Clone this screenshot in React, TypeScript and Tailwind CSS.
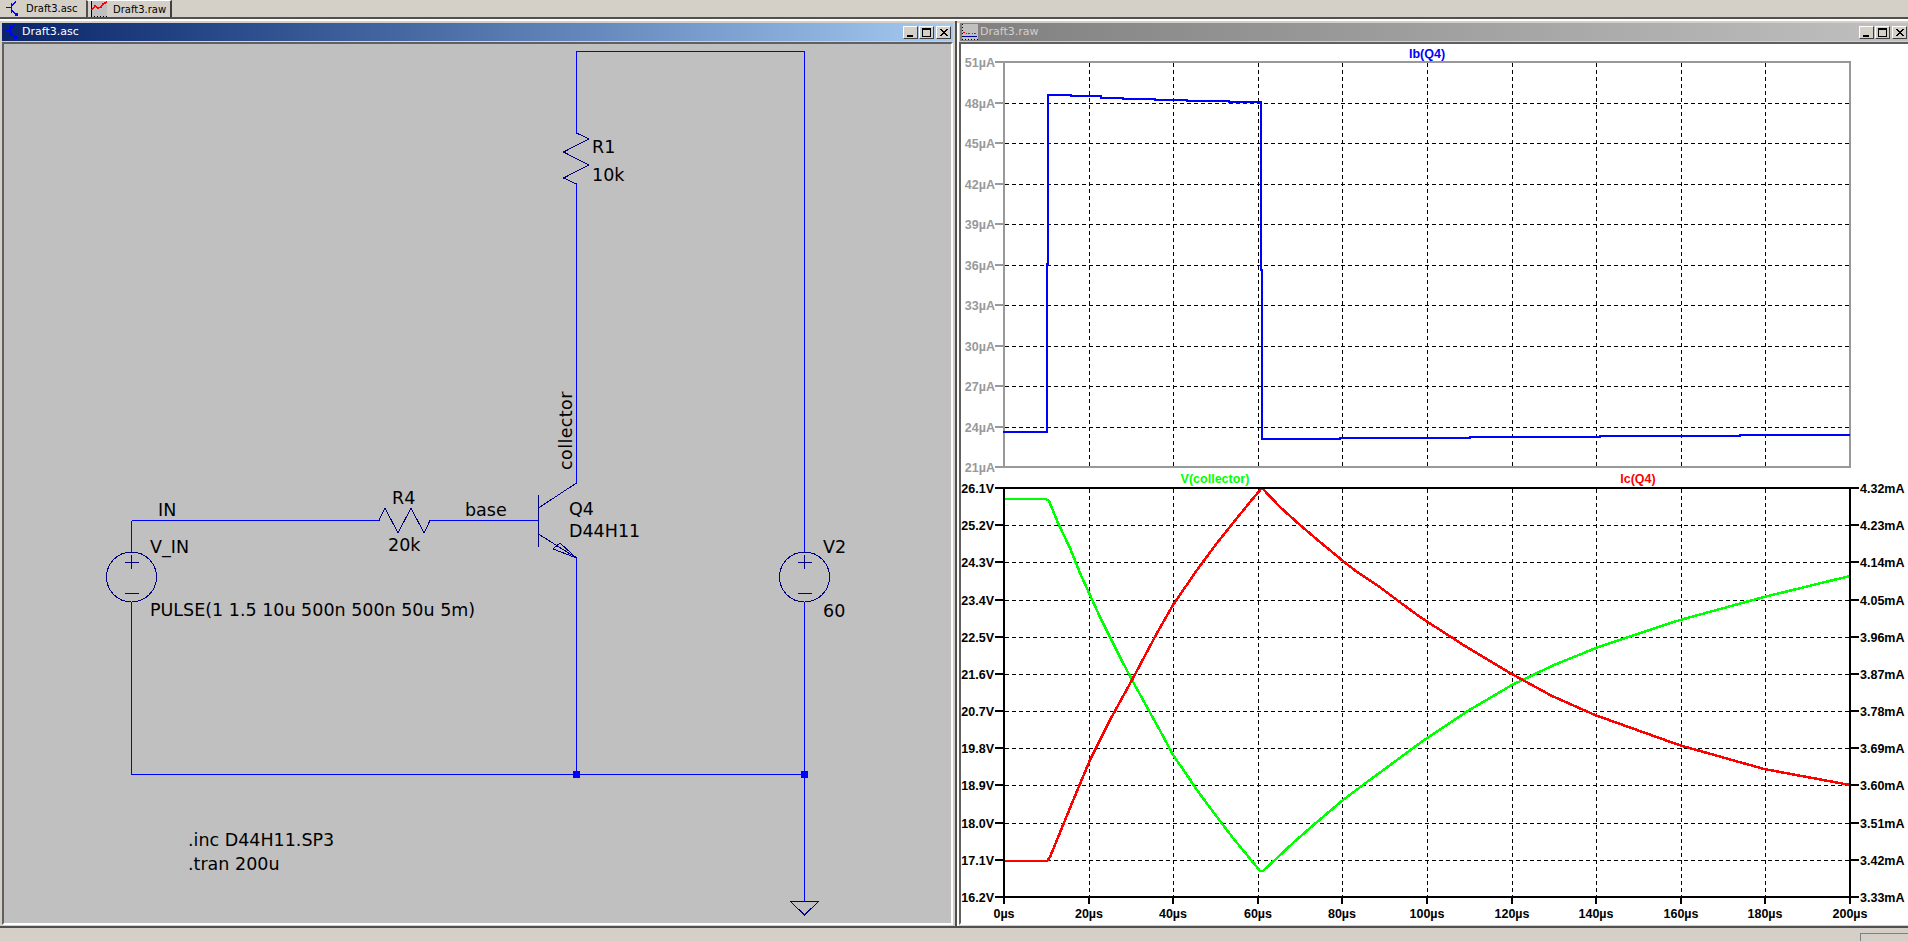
import React from "react"

const AXIS_X0 = 1004
const STEP_X = 84.6
const xLabels = ["0µs", "20µs", "40µs", "60µs", "80µs", "100µs", "120µs", "140µs", "160µs", "180µs", "200µs"]
const topLabels = ["51µA", "48µA", "45µA", "42µA", "39µA", "36µA", "33µA", "30µA", "27µA", "24µA", "21µA"]
const leftLabels = ["26.1V", "25.2V", "24.3V", "23.4V", "22.5V", "21.6V", "20.7V", "19.8V", "18.9V", "18.0V", "17.1V", "16.2V"]
const rightLabels = ["4.32mA", "4.23mA", "4.14mA", "4.05mA", "3.96mA", "3.87mA", "3.78mA", "3.69mA", "3.60mA", "3.51mA", "3.42mA", "3.33mA"]

const ib =
  "1003,432 1047,432 1047,264 1048,264 1048,95 1071,95 1071,96 1101,96 1101,98 1123,98 1123,99 1155,99 1155,100 1187,100 1187,101 1229,101 1229,102 1261,102 1261,270 1262,270 1262,439 1340,439 1340,438 1470,438 1470,437 1600,437 1600,436 1740,436 1740,435 1850,435"
const vc =
  "1004,499 1046,499 1049,501 1058,523 1070,548 1080,573 1090,595 1100,617 1110,637 1120,657 1132,680 1142,698 1153,718 1163,736 1173,755 1187,775 1197,790 1208,805 1220,821 1233,838 1247,855 1260,871 1263,871 1277,858 1293,843 1317,822 1343,800 1367,782 1397,760 1420,743 1466,712 1512,685 1554,665 1596,648 1680,620 1764,597 1850,576"
const ic =
  "1004,861 1047,861 1050,857 1070,808 1090,760 1110,720 1132,680 1157,633 1173,605 1197,570 1217,543 1233,523 1250,502 1262,488 1280,507 1300,525 1320,542 1343,561 1357,572 1377,585 1397,600 1420,617 1465,646 1510,673 1552,696 1595,715 1679,745 1764,769 1850,785"

function Tick({ x, y, x2, y2, gray }: { x: number; y: number; x2: number; y2: number; gray?: boolean }) {
  return <line x1={x} y1={y} x2={x2} y2={y2} stroke={gray ? "#999999" : "#000000"} strokeWidth={2} />
}

function Plots() {
  const topRows = topLabels.map((_, i) => Math.round(62 + 40.5 * i))
  const bottomRows = leftLabels.map((_, i) => Math.round(488 + (409 / 11) * i))
  const cols = xLabels.map((_, i) => Math.round(AXIS_X0 + STEP_X * i))

  return (
    <svg viewBox="961 44 947 879" className="block h-full w-full font-['Liberation_Sans',Arial,sans-serif] text-[12.5px] font-bold" shapeRendering="crispEdges">
      {/* grid */}
      <g stroke="#000000" strokeWidth={1} strokeDasharray="4 3">
        {cols.slice(1, -1).map((x) => (
          <g key={x}>
            <line x1={x + 0.5} y1={63} x2={x + 0.5} y2={466} />
            <line x1={x + 0.5} y1={489} x2={x + 0.5} y2={896} />
          </g>
        ))}
        {topRows.slice(1, -1).map((y) => (
          <line key={y} x1={1005} y1={y + 0.5} x2={1849} y2={y + 0.5} />
        ))}
        {bottomRows.slice(1, -1).map((y) => (
          <line key={y} x1={1005} y1={y + 0.5} x2={1849} y2={y + 0.5} />
        ))}
      </g>

      {/* top plot */}
      <rect x={1004} y={62} width={846} height={405} fill="none" stroke="#999999" strokeWidth={2} />
      {topRows.map((y, i) => (
        <g key={y}>
          <Tick x={995} y={y} x2={1004} y2={y} gray />
          <text x={995} y={y + 5} textAnchor="end" className="fill-[#999999]">{topLabels[i]}</text>
        </g>
      ))}
      <text x={1427} y={58} textAnchor="middle" className="fill-[#0000ff]">Ib(Q4)</text>
      <polyline points={ib} fill="none" stroke="#0000ff" strokeWidth={2.5} />

      {/* bottom plot */}
      <polyline points={vc} fill="none" stroke="#00ff00" strokeWidth={2.5} />
      <polyline points={ic} fill="none" stroke="#ff0000" strokeWidth={2.5} />
      <rect x={1004} y={488} width={846} height={409} fill="none" stroke="#000000" strokeWidth={2} />
      {bottomRows.map((y, i) => (
        <g key={y}>
          <Tick x={995} y={y} x2={1004} y2={y} />
          <text x={994} y={y + 5} textAnchor="end" className="fill-black">{leftLabels[i]}</text>
          <Tick x={1850} y={y} x2={1859} y2={y} />
          <text x={1860} y={y + 5} className="fill-black">{rightLabels[i]}</text>
        </g>
      ))}
      {cols.map((x, i) => (
        <g key={x}>
          <Tick x={x} y={897} x2={x} y2={904} />
          <text x={x} y={918} textAnchor="middle" className="fill-black">{xLabels[i]}</text>
        </g>
      ))}
      <text x={1215} y={483} textAnchor="middle" className="fill-[#00ff00]">V(collector)</text>
      <text x={1638} y={483} textAnchor="middle" className="fill-[#ff0000]">Ic(Q4)</text>
    </svg>
  )
}

function Source({ cy, cx }: { cx: number; cy: number }) {
  return (
    <g stroke="#000080" fill="none">
      <circle cx={cx} cy={cy} r={25} />
      <line x1={cx - 7} y1={cy - 15} x2={cx + 7} y2={cy - 15} />
      <line x1={cx} y1={cy - 22} x2={cx} y2={cy - 8} />
      <line x1={cx - 7} y1={cy + 16} x2={cx + 7} y2={cy + 16} />
    </g>
  )
}

function Schematic() {
  return (
    <svg viewBox="4 44 947 879" className="block h-full w-full font-['DejaVu_Sans',Verdana,sans-serif] text-[17.5px]" shapeRendering="crispEdges">
      {/* wires */}
      <g stroke="#0000ff" strokeWidth={1} fill="none">
        <polyline points="576.5,133 576.5,51.5 804.5,51.5 804.5,552" />
        <line x1={576.5} y1={184} x2={576.5} y2={483} />
        <line x1={131.5} y1={520.5} x2={379} y2={520.5} />
        <line x1={131.5} y1={520.5} x2={131.5} y2={552} />
        <polyline points="131.5,602 131.5,774.5 804.5,774.5" />
        <line x1={430} y1={520.5} x2={538} y2={520.5} />
        <line x1={576.5} y1={558} x2={576.5} y2={774} />
        <line x1={804.5} y1={602} x2={804.5} y2={901} />
      </g>
      <rect x={573} y={771} width={7} height={7} fill="#0000ff" />
      <rect x={801} y={771} width={7} height={7} fill="#0000ff" />

      {/* parts */}
      <g stroke="#000080" strokeWidth={1} fill="none">
        <polyline points="576.5,133 589,139 563.5,152 589,165 563.5,178 576.5,184" />
        <polyline points="379,520.5 385,508 398,533 411,508 424,533 430,520.5" />
        <line x1={538.5} y1={495} x2={538.5} y2={547} />
        <line x1={538.5} y1={508} x2={576.5} y2={483} />
        <line x1={538.5} y1={534} x2={576.5} y2={558} />
        <polygon points="576.5,558 553,549 560,543" />
        <polygon points="790,901 819,901 804.5,915" />
      </g>
      <Source cx={131.5} cy={577} />
      <Source cx={804.5} cy={577} />

      {/* labels */}
      <g className="fill-black">
        <text x={158} y={516}>IN</text>
        <text x={150} y={553}>V_IN</text>
        <text x={392} y={504}>R4</text>
        <text x={388} y={551}>20k</text>
        <text x={465} y={516}>base</text>
        <text x={150} y={616}>PULSE(1 1.5 10u 500n 500n 50u 5m)</text>
        <text x={592} y={153}>R1</text>
        <text x={592} y={181}>10k</text>
        <text x={569} y={515}>Q4</text>
        <text x={569} y={537}>D44H11</text>
        <text x={823} y={553}>V2</text>
        <text x={823} y={617}>60</text>
        <text x={572} y={470} transform="rotate(-90 572 470)" className="tracking-[0.4px]">collector</text>
        <text x={188} y={846}>.inc D44H11.SP3</text>
        <text x={188} y={870}>.tran 200u</text>
      </g>
    </svg>
  )
}

function SchematicIcon() {
  return (
    <svg viewBox="0 0 16 16" className="h-4 w-4 shrink-0" shapeRendering="crispEdges">
      <g stroke="#0000ff" strokeWidth={1.5} fill="none">
        <line x1={11} y1={1} x2={6.5} y2={5} />
        <line x1={6.5} y1={2} x2={6.5} y2={12} />
        <line x1={1} y1={6.5} x2={6} y2={6.5} />
        <line x1={6.5} y1={9} x2={11} y2={13} />
      </g>
      <rect x={10} y={12} width={3} height={3} fill="#0000ff" />
    </svg>
  )
}

function WaveIcon({ small }: { small?: boolean }) {
  return (
    <svg viewBox="0 0 16 16" className="h-4 w-4 shrink-0" shapeRendering="crispEdges">
      <rect width={16} height={16} fill="#c0c0c0" />
      <g stroke="#000000" strokeWidth={1}>
        <line x1={0.5} y1={0} x2={0.5} y2={15} strokeDasharray={small ? "1 2" : undefined} />
        <line x1={0} y1={15.5} x2={16} y2={15.5} strokeDasharray="1 2" />
      </g>
      {small ? (
        <>
          <polyline points="1,8 5,10 10,9 15,10" fill="none" stroke="#ff0000" strokeDasharray="2 1" />
          <polyline points="1,12 5,12 10,13 15,12" fill="none" stroke="#0000a0" />
        </>
      ) : (
        <polyline points="1,9 4,5 7,7 10,6 12,3 16,1" fill="none" stroke="#ff0000" strokeWidth={1.5} />
      )}
    </svg>
  )
}

function CaptionButtons() {
  return (
    <div className="flex items-center">
      <button className="flex h-[13px] w-[15px] items-end border border-t-white border-l-white border-r-[#404040] border-b-[#404040] bg-[#d4d0c8] pb-[1px] pl-[3px]">
        <span className="block h-[2px] w-[6px] bg-black" />
      </button>
      <button className="ml-[1px] flex h-[13px] w-[15px] items-center justify-center border border-t-white border-l-white border-r-[#404040] border-b-[#404040] bg-[#d4d0c8]">
        <span className="block h-[9px] w-[9px] border border-t-2 border-black" />
      </button>
      <button className="ml-[2px] flex h-[13px] w-[15px] items-center justify-center border border-t-white border-l-white border-r-[#404040] border-b-[#404040] bg-[#d4d0c8]">
        <svg viewBox="0 0 8 7" className="h-[7px] w-[8px]" shapeRendering="crispEdges">
          <path d="M0.5 0 L7.5 7 M7.5 0 L0.5 7" stroke="#000000" strokeWidth={1.6} />
        </svg>
      </button>
    </div>
  )
}

export default function App() {
  return (
    <div className="flex h-[941px] w-[1908px] flex-col overflow-hidden bg-[#d4d0c8] font-['DejaVu_Sans',Verdana,sans-serif]">
      {/* tabs */}
      <div className="flex h-[19px] shrink-0 items-start border-b-2 border-b-[#505050]">
        <div className="flex h-[17px] w-[86px] items-center pl-[5px] text-[10px] text-black">
          <SchematicIcon />
          <span className="ml-[5px]">Draft3.asc</span>
        </div>
        <div className="flex h-[17px] w-[86px] items-center border-r-2 border-l-2 border-t border-r-[#404040] border-l-[#505050] border-t-white pl-[3px] text-[10px] text-black">
          <WaveIcon />
          <span className="ml-[6px]">Draft3.raw</span>
        </div>
      </div>

      {/* windows */}
      <div className="flex min-h-0 flex-1 border-t-2 border-t-white">
        <section className="flex w-[955px] shrink-0 flex-col pt-[2px] pr-[2px] pl-[2px]">
          <header className="flex h-[18px] shrink-0 items-center justify-between bg-gradient-to-r from-[#0a246a] to-[#a6caf0] pr-[2px] pl-[2px]">
            <div className="flex items-center text-[11px] text-white">
              <SchematicIcon />
              <span className="ml-[2px]">Draft3.asc</span>
            </div>
            <CaptionButtons />
          </header>
          <div className="mt-[1px] h-[883px] border-2 border-t-[#606060] border-l-[#606060] border-r-white border-b-white bg-[#c0c0c0]">
            <Schematic />
          </div>
        </section>

        <section className="flex min-w-0 flex-1 flex-col border-l-2 border-l-[#505050] pt-[2px]">
          <div className="flex flex-1 flex-col border-l-2 border-l-white">
            <header className="ml-[1px] flex h-[18px] shrink-0 items-center justify-between bg-gradient-to-r from-[#808080] to-[#c0c0c0] pr-[1px] pl-[2px]">
              <div className="flex items-center text-[11px] text-[#d4d0c8]">
                <WaveIcon small />
                <span className="ml-[2px]">Draft3.raw</span>
              </div>
              <CaptionButtons />
            </header>
            <div className="mt-[1px] h-[883px] border-t-2 border-l-2 border-b-2 border-t-[#606060] border-l-[#606060] border-b-white bg-white">
              <Plots />
            </div>
          </div>
        </section>
      </div>

      {/* status bar */}
      <div className="flex h-[15px] shrink-0 items-end justify-end border-t-2 border-t-[#505050]">
        <div className="h-[8px] w-[48px] border-t border-l border-t-[#808080] border-l-[#808080]" />
      </div>
    </div>
  )
}
